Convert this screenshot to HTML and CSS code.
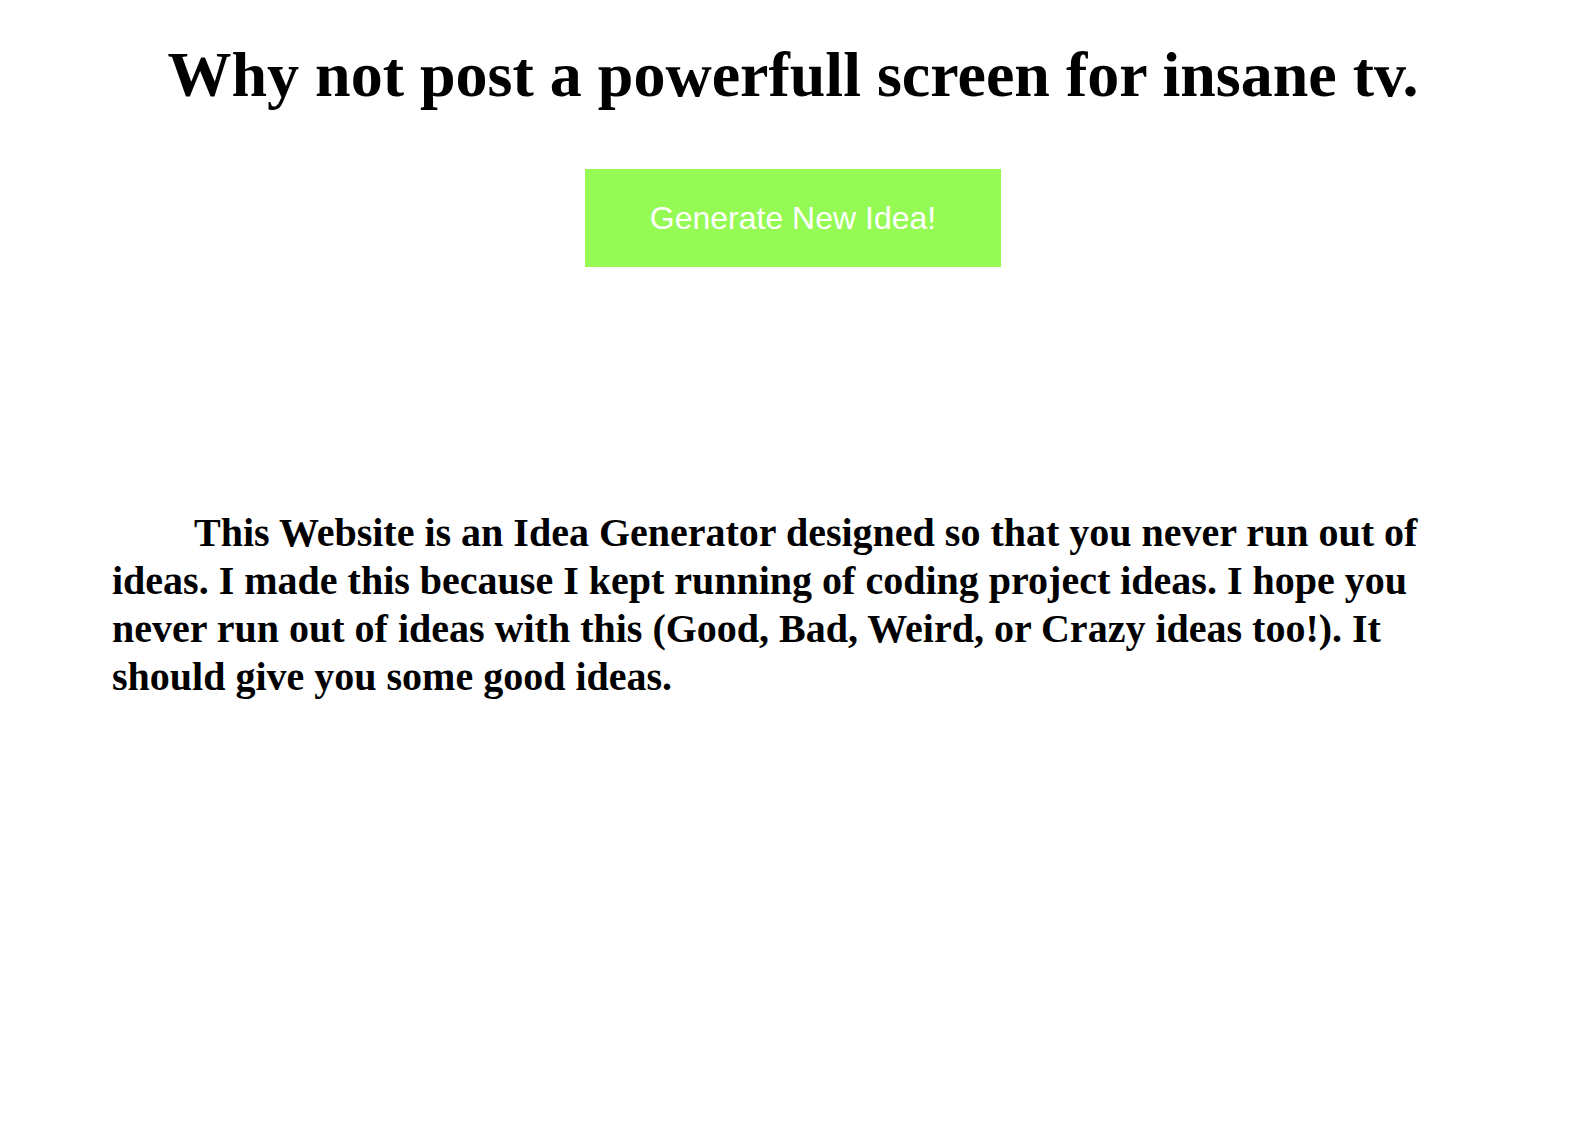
FILE: index.html
```html
<!DOCTYPE html>
<html>
<head>
<meta charset="utf-8">
<title>Idea Generator</title>
<link rel="stylesheet" href="styles.css">
</head>
<body>
<h1 class="idea">Why not post a powerfull screen for insane tv.</h1>
<div class="actions">
  <button class="generate">Generate New Idea!</button>
</div>
<p class="about">This Website is an Idea Generator designed so that you never run out of ideas. I made this because I kept running of coding project ideas. I hope you never run out of ideas with this (Good, Bad, Weird, or Crazy ideas too!). It should give you some good ideas.</p>
</body>
</html>
```
FILE: styles.css
```css
body {
  margin: 8px;
  font-family: "Liberation Serif", "Times New Roman", serif;
  color: #000;
  background: #fff;
}
.idea {
  text-align: center;
  font-size: 64px;
  font-weight: bold;
  margin: 30px 0 0;
}
.actions {
  display: flex;
  justify-content: center;
  margin-top: 57px;
}
.generate {
  width: 416px;
  height: 98px;
  background: #96fa55;
  color: #fff;
  border: none;
  font-family: "Liberation Sans", Arial, sans-serif;
  font-size: 32px;
  padding: 0;
}
.about {
  margin: 242px 104px 0;
  text-indent: 82px;
  font-size: 40px;
  font-weight: bold;
  line-height: 48px;
}
```
